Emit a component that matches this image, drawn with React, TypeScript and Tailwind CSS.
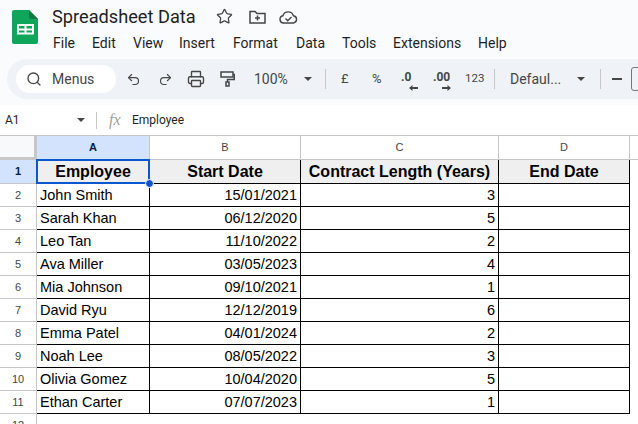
import { Search, Star, Undo2, Redo2, Printer } from 'lucide-react'

const menus = [
  ['File', 'w-[39px]'],
  ['Edit', 'w-[41px]'],
  ['View', 'w-[46px]'],
  ['Insert', 'w-[54px]'],
  ['Format', 'w-[63px]'],
  ['Data', 'w-[46px]'],
  ['Tools', 'w-[51px]'],
  ['Extensions', 'w-[85px]'],
  ['Help', 'w-[40px]'],
]

const rows = [
  ['John Smith', '15/01/2021', '3'],
  ['Sarah Khan', '06/12/2020', '5'],
  ['Leo Tan', '11/10/2022', '2'],
  ['Ava Miller', '03/05/2023', '4'],
  ['Mia Johnson', '09/10/2021', '1'],
  ['David Ryu', '12/12/2019', '6'],
  ['Emma Patel', '04/01/2024', '2'],
  ['Noah Lee', '08/05/2022', '3'],
  ['Olivia Gomez', '10/04/2020', '5'],
  ['Ethan Carter', '07/07/2023', '1'],
]

const headCls = 'flex items-center justify-center bg-[#efefef] border-b border-r border-black text-[16px] font-bold text-black'
const cellCls = 'flex items-center px-[3px] pt-[2px] border-b border-r border-black text-[14.5px] text-black'
const rowNumCls = 'flex items-center justify-center bg-white border-b border-r border-[#c7c7c7] text-[11px] text-[#444746]'
const colCls = 'flex items-center justify-center border-r border-b border-[#c7c7c7] text-[11px] text-[#444746]'

function SheetsLogo() {
  return (
    <svg width="26" height="34" viewBox="0 0 26 34">
      <path d="M2 0H17L26 9V32a2 2 0 0 1-2 2H2a2 2 0 0 1-2-2V2a2 2 0 0 1 2-2Z" fill="#0fa55a" />
      <path d="M17 0L26 9H19a2 2 0 0 1-2-2Z" fill="#0a7c43" />
      <path d="M5 14h17v10.500H5Zm2 2v2.500h5.500V16Zm7.500 0v2.500H20V16ZM7 20.500v2h5.500v-2Zm7.500 0v2H20v-2Z" fill="#fff" fillRule="evenodd" />
    </svg>
  )
}

function MoveIcon() {
  return (
    <svg width="17" height="14" viewBox="0 0 17 14" fill="none" stroke="#444746" strokeWidth="1.500">
      <path d="M1 1.500h5l2 2h8v9.500H1Z" />
      <path d="M8.500 5.500v5M6 8h5" />
    </svg>
  )
}

function CloudIcon() {
  return (
    <svg width="19" height="14" viewBox="0 0 19 14" fill="none" stroke="#444746" strokeWidth="1.400">
      <path d="M4.500 13a3.700 3.700 0 0 1-.6-7.300A5.500 5.500 0 0 1 14.400 5.700 3.700 3.700 0 0 1 14.500 13Z" />
      <path d="M6.500 8.500l2.200 2.200 3.800-3.800" />
    </svg>
  )
}

function PaintFormat() {
  return (
    <svg width="15" height="16" viewBox="0 0 15 16" fill="none" stroke="#444746" strokeWidth="1.500" className="shrink-0">
      <path d="M1 1h12v5H1Z" />
      <path d="M13 3.500h1.250v5H7.500V11" />
      <path d="M6 11h3v4H6Z" />
    </svg>
  )
}

function Caret() {
  return <div className="w-0 h-0 border-x-[4px] border-x-transparent border-t-[4px] border-t-[#444746]" />
}

function Sep() {
  return <div className="w-px h-[20px] bg-[#c7c7c7]" />
}

function ArrowLeft() {
  return (
    <svg width="9" height="6" viewBox="0 0 9 6" className="absolute left-[8px] top-[18px]">
      <path d="M0 3L3.500 0V2H9V4H3.500V6Z" fill="#444746" />
    </svg>
  )
}

function ArrowRight() {
  return (
    <svg width="9" height="6" viewBox="0 0 9 6" className="absolute left-[9px] top-[18px]">
      <path d="M9 3L5.500 0V2H0V4H5.500V6Z" fill="#444746" />
    </svg>
  )
}

export default function App() {
  return (
    <div className="w-[638px] h-[424px] overflow-hidden bg-[#f9fbfd] font-['Roboto',sans-serif] flex flex-col">
      <div className="flex h-[59px] shrink-0">
        <div className="pl-[12px] pt-[10px] w-[52px] shrink-0">
          <SheetsLogo />
        </div>
        <div className="flex flex-col">
          <div className="flex items-center h-[26px] pt-[7px]">
            <span className="text-[18.200px] text-[#1f1f1f] w-[164px]">Spreadsheet Data</span>
            <Star size={17} strokeWidth={1.800} className="text-[#444746] shrink-0" />
            <div className="ml-[16px]"><MoveIcon /></div>
            <div className="ml-[13px]"><CloudIcon /></div>
          </div>
          <div className="flex items-center mt-[5px] h-[24px] text-[14px] text-[#1f1f1f] ml-[1px]">
            {menus.map(([m, w]) => (
              <span key={m} className={w}>{m}</span>
            ))}
          </div>
        </div>
      </div>

      <div className="flex items-center shrink-0 h-[40px] ml-[7px] w-[680px] rounded-l-[20px] bg-[#eff3f8] pl-[9px] text-[#444746]">
        <div className="flex items-center w-[100px] h-[28px] rounded-full bg-white pl-[10px] shrink-0">
          <Search size={16} strokeWidth={2} />
          <span className="ml-[10px] text-[14px]">Menus</span>
        </div>
        <Undo2 size={15} strokeWidth={1.800} className="ml-[10px] shrink-0" />
        <Redo2 size={15} strokeWidth={1.800} className="ml-[17px] shrink-0" />
        <Printer size={18} strokeWidth={1.800} className="ml-[14px] shrink-0" />
        <div className="ml-[15px]"><PaintFormat /></div>
        <span className="ml-[19px] text-[14px] w-[42px] shrink-0">100%</span>
        <div className="ml-[8px]"><Caret /></div>
        <div className="ml-[13px]"><Sep /></div>
        <span className="ml-[15px] w-[8px] text-[13px]">£</span>
        <span className="ml-[23px] w-[12px] text-[13px]">%</span>
        <div className="ml-[17px] relative w-[16px] h-[24px] text-[12px] font-bold leading-[20px]">
          .0
          <ArrowLeft />
        </div>
        <div className="ml-[16px] relative w-[18px] h-[24px] text-[12px] font-bold leading-[20px]">
          .00
          <ArrowRight />
        </div>
        <span className="ml-[14px] w-[18px] text-[11.500px]">123</span>
        <div className="ml-[11px]"><Sep /></div>
        <span className="ml-[15px] text-[14px] w-[60px]">Defaul...</span>
        <div className="ml-[7px]"><Caret /></div>
        <div className="ml-[15px]"><Sep /></div>
        <div className="ml-[11px] w-[10px] h-[1.500px] bg-[#444746]" />
        <div className="ml-[9px] w-[20px] h-[24px] rounded-[3px] border border-[#747775]" />
      </div>

      <div className="flex items-center shrink-0 h-[31px] mt-[6px] bg-white border-b border-[#c7c7c7] text-[#444746]">
        <span className="pl-[5px] w-[77px] text-[12px] text-[#1f1f1f]">A1</span>
        <Caret />
        <div className="ml-[11px]"><div className="w-px h-[17px] bg-[#c7c7c7]" /></div>
        <span className="ml-[12px] font-['Liberation_Serif',serif] italic text-[16px] text-[#a0a0a0] w-[23px]">fx</span>
        <span className="text-[12px] text-[#1f1f1f]">Employee</span>
      </div>

      <div className="flex flex-col flex-1 min-h-0 bg-white font-['Liberation_Sans',sans-serif]">
        <div className="flex shrink-0 h-[24px]">
          <div className="w-[37px] bg-[#f8f9fa] border-r-[3px] border-b-[3px] border-[#c7c7c7]" />
          <div className="flex items-center justify-center w-[113px] bg-[#d3e3fd] border-r border-b border-[#c7c7c7] text-[11px] font-bold text-[#041e49]">A</div>
          <div className={`${colCls} w-[151px]`}>B</div>
          <div className={`${colCls} w-[198px]`}>C</div>
          <div className={`${colCls} w-[131px]`}>D</div>
          <div className="flex-1 border-b border-[#c7c7c7]" />
        </div>

        <div className="grid grid-cols-[37px_113px_151px_198px_131px] grid-rows-[24px_repeat(11,23px)]">
          <div className="flex items-center justify-center bg-[#d3e3fd] border-b border-r border-[#c7c7c7] text-[11px] font-bold text-[#041e49]">1</div>
          <div className={`${headCls} relative`}>
            Employee
            <div className="absolute -left-px -top-px w-[114px] h-[25px] border-2 border-[#0b57d0]" />
            <div className="absolute -right-[5px] -bottom-[5px] w-[9px] h-[9px] rounded-full bg-[#0b57d0] border border-white z-10" />
          </div>
          <div className={headCls}>Start Date</div>
          <div className={headCls}>Contract Length (Years)</div>
          <div className={headCls}>End Date</div>
          {rows.map((r, i) => (
            <div key={r[0]} className="contents">
              <div className={rowNumCls}>{i + 2}</div>
              <div className={cellCls}>{r[0]}</div>
              <div className={`${cellCls} justify-end`}>{r[1]}</div>
              <div className={`${cellCls} justify-end`}>{r[2]}</div>
              <div className={cellCls} />
            </div>
          ))}
          <div className={rowNumCls}>12</div>
        </div>
      </div>
    </div>
  )
}
